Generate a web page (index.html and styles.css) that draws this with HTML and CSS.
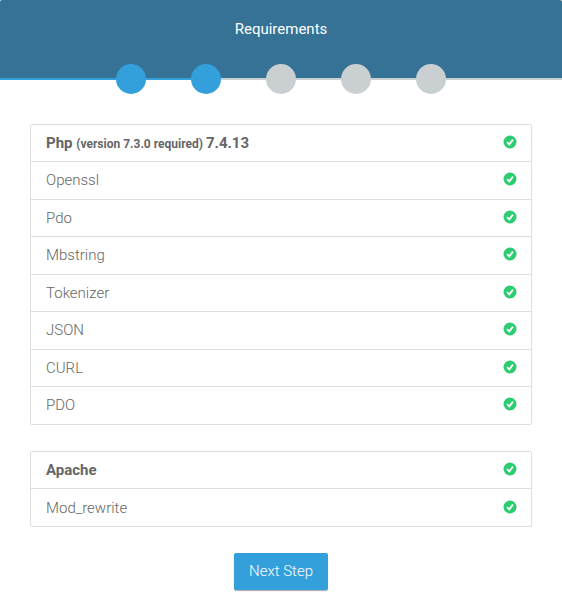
FILE: index.html
```html
<!DOCTYPE html>
<html lang="en">
<head>
<meta charset="utf-8">
<title>Requirements</title>
<link rel="stylesheet" href="styles.css">
</head>
<body>
<svg class="defs" width="0" height="0"><symbol id="ok" viewBox="0 0 14 14"><circle cx="7" cy="7" r="6.5" fill="#2ecc71"/><path d="M4 7.2l2.3 2.1 3.6-4.7" fill="none" stroke="#fff" stroke-width="1.8"/></symbol></svg>
<header class="header">
<h1 class="title">Requirements</h1>
</header>
<ul class="steps">
<li class="step active"></li><li class="step active"></li><li class="step"></li><li class="step"></li><li class="step"></li>
</ul>
<main class="main">
<ul class="list">
<li class="item head"><span>Php <small>(version 7.3.0 required)</small> 7.4.13</span><svg class="icon"><use href="#ok"/></svg></li>
<li class="item"><span>Openssl</span><svg class="icon"><use href="#ok"/></svg></li>
<li class="item"><span>Pdo</span><svg class="icon"><use href="#ok"/></svg></li>
<li class="item"><span>Mbstring</span><svg class="icon"><use href="#ok"/></svg></li>
<li class="item"><span>Tokenizer</span><svg class="icon"><use href="#ok"/></svg></li>
<li class="item"><span>JSON</span><svg class="icon"><use href="#ok"/></svg></li>
<li class="item"><span>CURL</span><svg class="icon"><use href="#ok"/></svg></li>
<li class="item"><span>PDO</span><svg class="icon"><use href="#ok"/></svg></li>
</ul>
<ul class="list">
<li class="item head"><span>Apache</span><svg class="icon"><use href="#ok"/></svg></li>
<li class="item"><span>Mod_rewrite</span><svg class="icon"><use href="#ok"/></svg></li>
</ul>
<div class="actions"><a class="button">Next Step</a></div>
</main>
</body>
</html>
```

FILE: styles.css
```css
* { box-sizing: border-box; }
body { margin: 0; background: #fff; font-family: Roboto, sans-serif; font-weight: 300; font-size: 15px; line-height: 20px; color: #666; }
.defs { display: block; height: 0; }
ul { list-style: none; margin: 0; padding: 0; }
.header { height: 78px; padding-top: 19px; background: #357295; border-radius: 2px 2px 0 0; text-align: center; }
.title { margin: 0; font-size: 15px; line-height: 20px; font-weight: 400; color: #fff; }
.steps { display: flex; justify-content: center; gap: 45px; height: 30px; margin-top: -14px; background: linear-gradient(#34a0db, #34a0db) 0 14px / 206px 2px no-repeat, linear-gradient(#cacfd2, #cacfd2) 0 14px / 100% 2px no-repeat; }
.step { width: 30px; height: 30px; border-radius: 50%; background: #cacfd2; }
.step.active { background: #34a0db; }
.main { padding: 29.5px 30px; }
.list { border: 1px solid #dfdfdf; border-radius: 2px; }
.list + .list { margin: 26.4px 0 26px; }
.item { display: flex; align-items: flex-start; justify-content: space-between; height: 37.5px; padding: 8.3px 14px 0 15px; border-bottom: 1px solid #dfdfdf; }
.item.head { font-weight: 700; }
.item:last-child { height: 36.5px; border-bottom: 0; }
.item small { font-size: 12px; line-height: 1; margin-right: -0.7px; }
.icon { width: 14px; height: 14px; margin-top: 1.95px; }
.actions { text-align: center; }
.button { display: inline-block; width: 94px; height: 37px; line-height: 36px; background: #34a0db; border-radius: 2px; color: #fff; box-shadow: 0 1px 1px #aaa; }
```
